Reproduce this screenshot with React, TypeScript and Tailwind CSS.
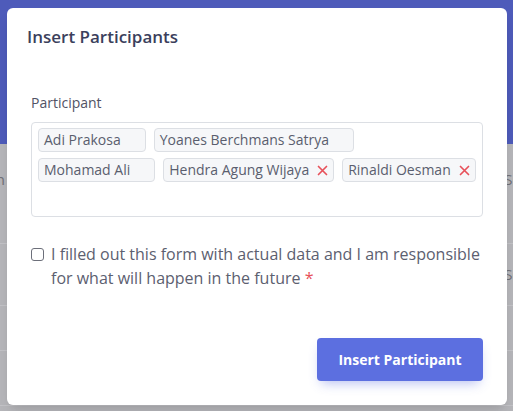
import React from 'react';

const people = [
  { name: 'Adi Prakosa', removable: false },
  { name: 'Yoanes Berchmans Satrya', removable: false },
  { name: 'Mohamad Ali', removable: false },
  { name: 'Hendra Agung Wijaya', removable: true },
  { name: 'Rinaldi Oesman', removable: true },
];

const Tag = ({ name, removable }: { name: string; removable: boolean }) => (
  <span className="flex h-6 items-center gap-2 rounded border border-[#dcdfe4] bg-[#f6f7f9] pl-[5px] pr-[5px] text-[14px] leading-[22px] text-[#5a5e6e]">
    {name}
    <span className={removable ? 'text-[#e7515a]' : 'invisible'}>
      <svg width="11" height="11" viewBox="0 0 11 11" fill="none" stroke="currentColor" strokeWidth="1.7" strokeLinecap="round">
        <path d="M1.5 1.5 L9.5 9.5 M9.5 1.5 L1.5 9.5" />
      </svg>
    </span>
  </span>
);

const App = () => {
  return (
    <div className="relative h-[411px] w-[513px] overflow-hidden bg-[#b6b6ba] font-['Open_Sans',sans-serif]">
      {/* dimmed page behind the modal */}
      <div className="h-[144px] bg-[#4e5bba]"></div>
      <div className="flex h-[99px] items-start justify-between pt-[24px] text-[15px] text-[#707077]">
        <span className="-ml-2">in</span>
        <span className="-mr-2">Se</span>
      </div>
      <div className="flex h-[62px] items-center justify-end border-t border-[#c3c3c7] text-[15px] text-[#707077]">
        <span className="-mr-2">Se</span>
      </div>
      <div className="h-[45px] border-t border-[#c3c3c7]"></div>
      <div className="h-[55px] border-t border-[#c3c3c7]"></div>
      <div className="border-t border-[#c3c3c7]"></div>

      {/* modal */}
      <div className="absolute left-[7px] top-[8px] flex h-[397px] w-[500px] flex-col rounded-md bg-white shadow-lg">
        <h2 className="pl-5 pt-[17px] text-[17px] font-semibold leading-6 text-[#3b3f5c]">Insert Participants</h2>

        <div className="px-6 pt-[44px]">
          <label className="mb-[9px] block text-[14px] font-medium leading-5 text-[#515365]">Participant</label>
          <div className="flex h-[95px] flex-wrap content-start gap-x-2 gap-y-[6px] rounded border border-[#dcdfe4] pl-[6px] pr-[6px] pt-[5px]">
            {people.map((p) => (
              <Tag key={p.name} name={p.name} removable={p.removable} />
            ))}
          </div>

          <div className="mt-[25px] flex items-start gap-[7px] text-[16px] leading-6 text-[#5c6070]">
            <input type="checkbox" className="mt-[6px] h-[13px] w-[13px] shrink-0 appearance-none rounded-[3px] border border-[#6c6f7a] bg-white" />
            <p>
              I filled out this form with actual data and I am responsible for what will happen in the future{' '}
              <span className="text-[#e7515a]">*</span>
            </p>
          </div>
        </div>

        <div className="mt-auto flex justify-end px-6 pb-6">
          <button className="h-[43px] w-[166px] rounded bg-[#5c6fe0] text-[14px] font-bold text-white shadow-[0_6px_12px_-4px_rgba(92,111,224,0.45)]">
            Insert Participant
          </button>
        </div>
      </div>
    </div>
  );
};

export default App;
